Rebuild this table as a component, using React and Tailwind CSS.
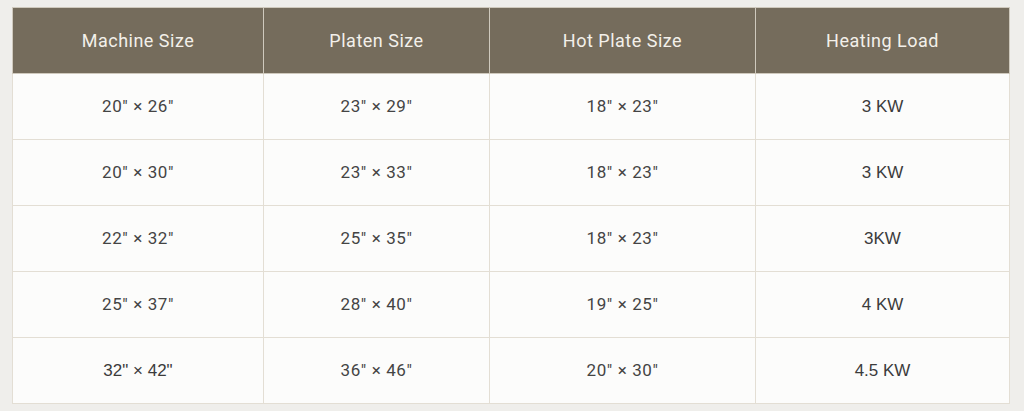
import React from "react";

const rows = [
  [["20″ × 26″", 0], ["23″ × 29″", 0], ["18″ × 23″", 0], ["3 KW", 1]],
  [["20″ × 30″", 0], ["23″ × 33″", 0], ["18″ × 23″", 0], ["3 KW", 1]],
  [["22″ × 32″", 0], ["25″ × 35″", 0], ["18″ × 23″", 0], ["3KW", 1]],
  [["25″ × 37″", 0], ["28″ × 40″", 0], ["19″ × 25″", 0], ["4 KW", 1]],
  [["32\" × 42\"", 1], ["36″ × 46″", 0], ["20″ × 30″", 0], ["4.5 KW", 1]],
];

const heads = ["Machine Size", "Platen Size", "Hot Plate Size", "Heating Load"];
const widths = ["w-[251px]", "w-[226px]", "w-[266px]", "w-[254px]"];

export default function App() {
  return (
    <div className="w-[1024px] h-[411px] bg-[#efeeeb] pt-[7px] pl-[12px]">
      <table className="border-collapse w-[997px] table-fixed">
        <thead>
          <tr className="bg-[#756c5c]">
            {heads.map((h, i) => (
              <th
                key={h}
                className={`${widths[i]} h-[66px] border border-[#cfc9bd] text-center font-normal text-[18px] text-[#f3f0ea] font-['Roboto',sans-serif] tracking-[0.5px]`}
              >
                {h}
              </th>
            ))}
          </tr>
        </thead>
        <tbody>
          {rows.map((r, ri) => (
            <tr key={ri} className="bg-[#fcfcfb]">
              {r.map(([t, arial], ci) => (
                <td
                  key={ci}
                  className={`h-[66px] border border-[#e3ded4] text-center ${
                    arial
                      ? "font-['Liberation_Sans',Arial,sans-serif] text-[17px] text-[#3b3b3b]"
                      : "font-['Roboto',sans-serif] font-normal text-[17px] tracking-[0.6px] text-[#444444]"
                  }`}
                >
                  {t}
                </td>
              ))}
            </tr>
          ))}
        </tbody>
      </table>
    </div>
  );
}
